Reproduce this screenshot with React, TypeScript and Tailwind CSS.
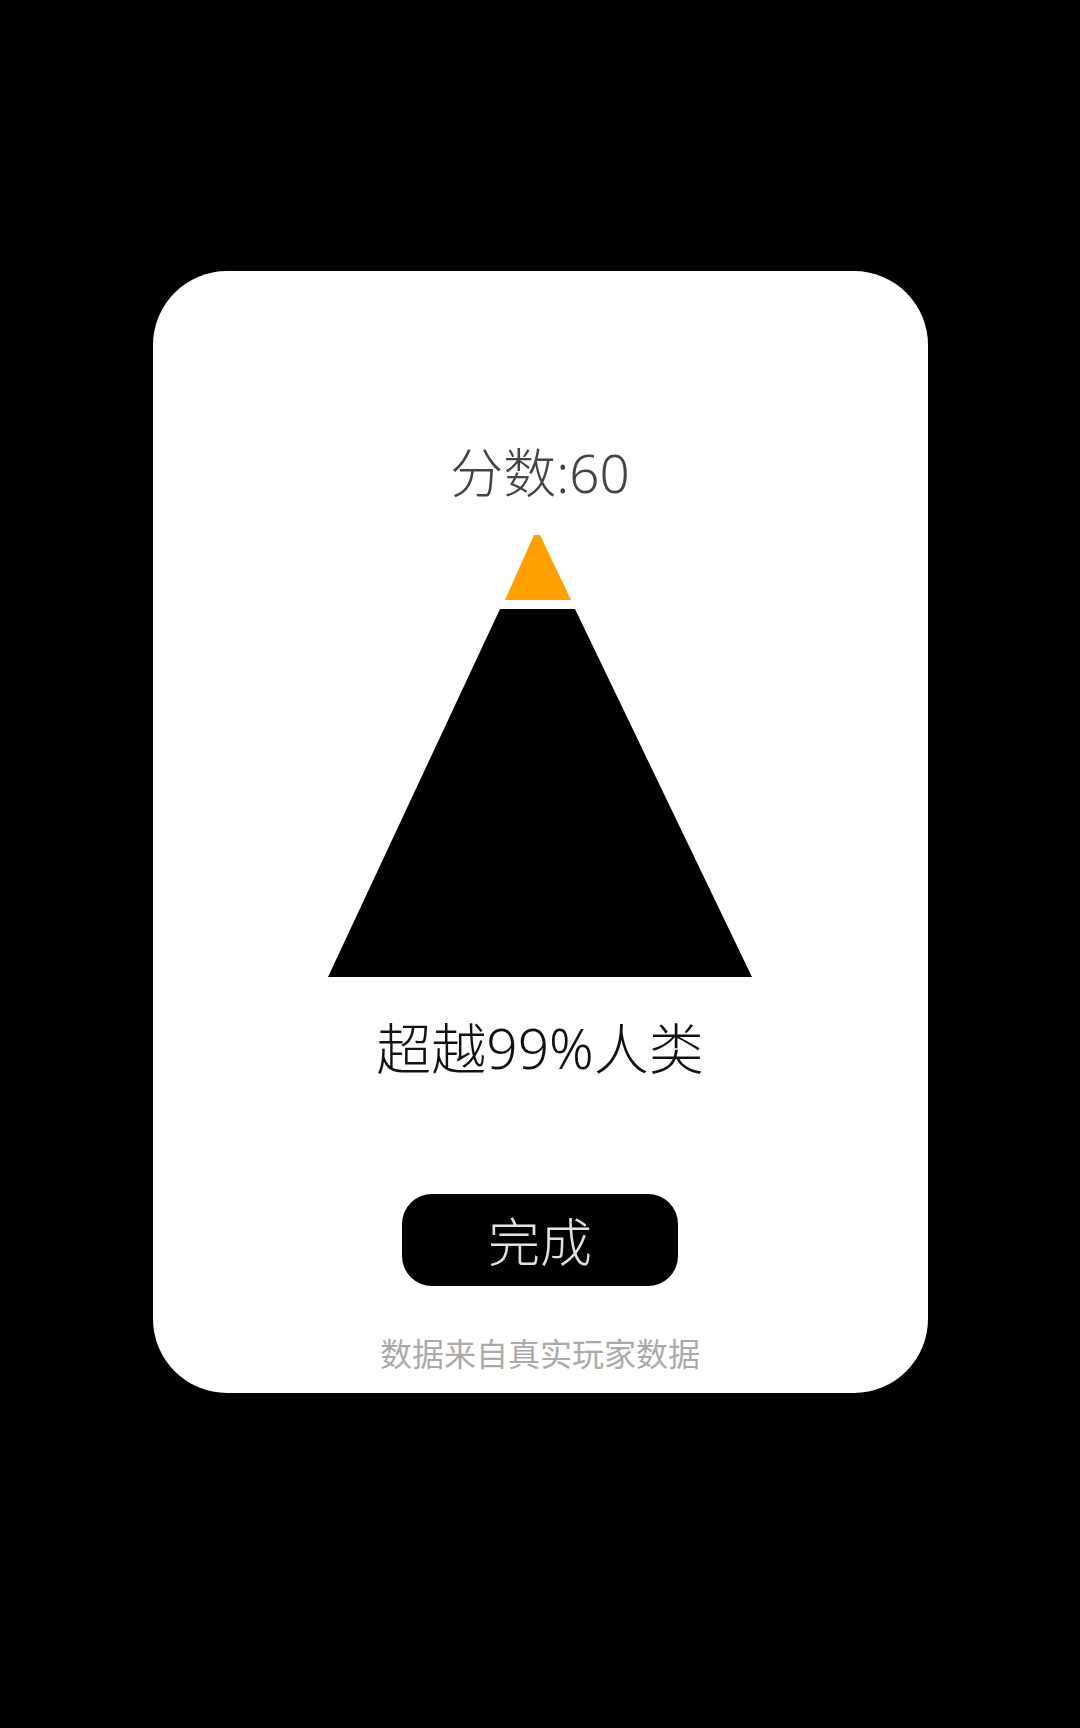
export default function App() {
  return (
    <div className="min-h-[1728px] bg-black pt-[271px] font-['Noto_Sans_CJK_SC','Noto_Sans',sans-serif]">
      <div className="mx-auto flex h-[1122px] w-[775px] flex-col items-center rounded-[74px] bg-white pt-[172px]">
        {/* Score */}
        <div className="h-[60px] font-['Noto_Sans','Noto_Sans_CJK_SC',sans-serif] text-[53px] leading-[60px] font-light text-[#444]">
          分数:60
        </div>

        {/* Pyramid */}
        <svg className="mt-[27px] block" width="440" height="450" viewBox="320 530 440 450">
          <polygon points="534,535 540,535 571,600 505,600" fill="#ffa000" />
          <polygon points="500,609 575,609 752,977 328,977" fill="#000" />
        </svg>

        <div className="mt-[38px] h-[60px] font-['Noto_Sans','Noto_Sans_CJK_SC',sans-serif] text-[55px] leading-[60px] font-light text-[#111]">
          超越99%人类
        </div>

        <button className="mt-[116px] flex h-[92px] w-[276px] items-center justify-center rounded-[30px] bg-black text-[52px] leading-none font-light text-[#e0e0e0]">
          完成
        </button>

        <div className="mt-[46px] h-[40px] text-[32px] leading-[40px] text-[#aaa]">数据来自真实玩家数据</div>
      </div>
    </div>
  )
}
